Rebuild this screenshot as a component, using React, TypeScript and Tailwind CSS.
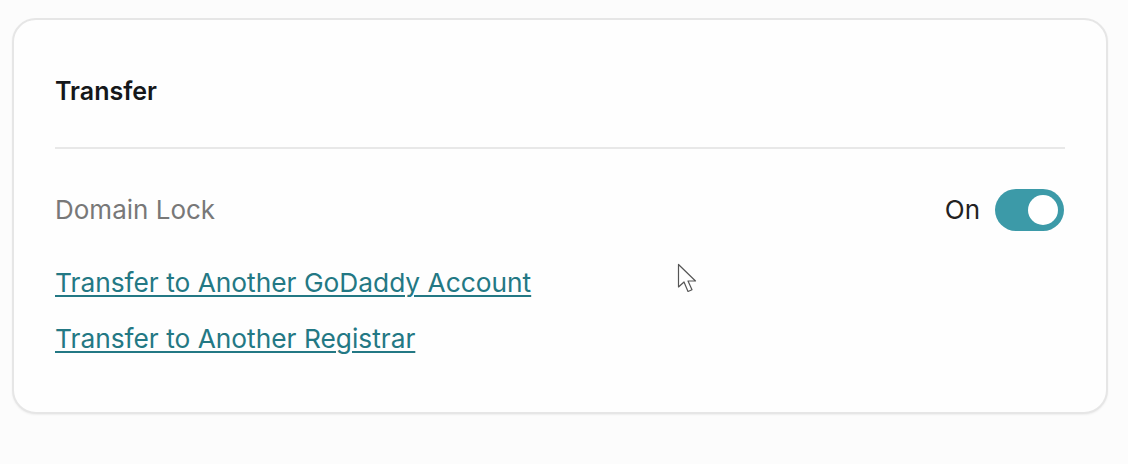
import React from "react";

export default function App() {
  return (
    <div className="w-[1128px] h-[464px] bg-[#fcfcfc] pt-[18px] pl-[12px] relative" style={{ fontFamily: "Inter, 'Noto Sans', sans-serif" }}>
      <div className="w-[1096px] h-[396px] bg-[#fefefe] border-2 border-[#e6e6e6] rounded-[24px] shadow-[0_1px_2px_rgba(0,0,0,0.06)] px-[41px] pt-[55px]">
        <h2 className="text-[25px] leading-[32px] font-semibold text-[#15171a]">Transfer</h2>
        <div className="mt-[40px] h-[2px] bg-[#e8e8e8]" />
        <div className="mt-[40px] flex items-center justify-between h-[42px]">
          <span className="text-[26px] leading-[32px] text-[#787878]">Domain Lock</span>
          <div className="flex items-center gap-[15px] mr-[1px]">
            <span className="text-[26px] leading-[32px] text-[#222222]">On</span>
            <div className="w-[69px] h-[42px] rounded-full bg-[#3c9aa8] flex items-center justify-end pr-[6px]">
              <div className="w-[30px] h-[30px] rounded-full bg-white" />
            </div>
          </div>
        </div>
        <div className="mt-[36px] flex flex-col gap-[24px] items-start">
          <a className="text-[26.3px] leading-[32px] text-[#237884] underline decoration-2 underline-offset-[3px]">Transfer to Another GoDaddy Account</a>
          <a className="text-[26.3px] leading-[32px] text-[#237884] underline decoration-2 underline-offset-[3px]">Transfer to Another Registrar</a>
        </div>
      </div>
      <svg className="absolute left-[677px] top-[263px]" width="24" height="34" viewBox="0 0 24 34">
        <path d="M1.5 1.5 L1.5 24 L7 19 L11 28.5 L15 26.8 L11 18 L18.5 18 Z" fill="#ffffff" stroke="#555555" strokeWidth="1.2" strokeLinejoin="round" />
      </svg>
    </div>
  );
}
